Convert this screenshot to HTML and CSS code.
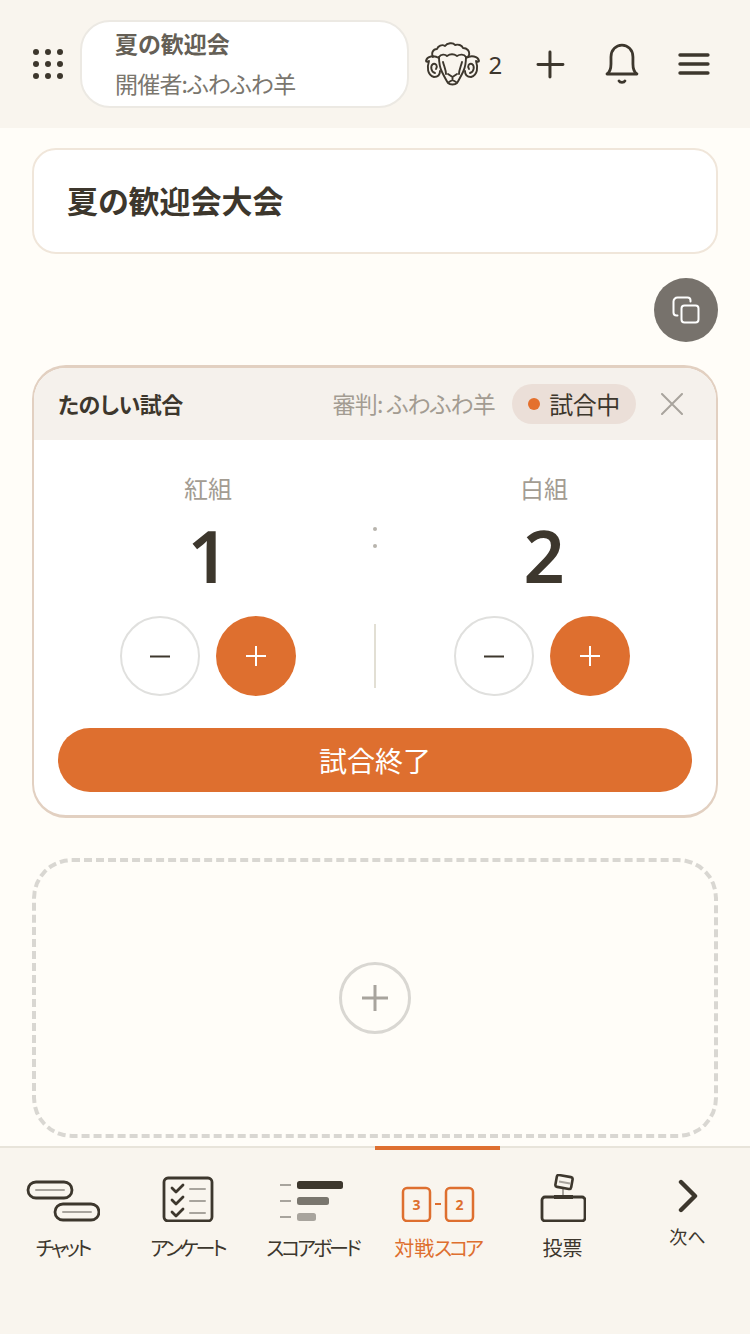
FILE: index.html
```html
<!DOCTYPE html>
<html lang="ja">
<head>
    <meta charset="UTF-8">
    <meta name="viewport" content="width=device-width, initial-scale=1.0">
    <title>夏の歓迎会大会</title>
    <link rel="stylesheet" href="styles.css">
</head>
<body>

    <header class="top-bar">
        <svg class="grid-icon" width="30" height="30" viewBox="0 0 30 30" fill="#3d372d">
            <circle cx="3" cy="3" r="3"/><circle cx="15" cy="3" r="3"/><circle cx="27" cy="3" r="3"/>
            <circle cx="3" cy="15" r="3"/><circle cx="15" cy="15" r="3"/><circle cx="27" cy="15" r="3"/>
            <circle cx="3" cy="27" r="3"/><circle cx="15" cy="27" r="3"/><circle cx="27" cy="27" r="3"/>
        </svg>
        <div class="event-pill">
            <div class="event-name">夏の歓迎会</div>
            <div class="event-host">開催者:ふわふわ羊</div>
        </div>
        <div class="members">
            <svg width="55" height="44" viewBox="0 0 55 44" fill="none" stroke="#3d372d" stroke-width="1.900" stroke-linecap="round" stroke-linejoin="round">
                <!-- wool -->
                <path d="M8 15c-2-4 0-8 4-8 1-3 5-5 8-3 2-3 8-4 10-1 3-1 7 0 8 3 4 0 7 3 6 7l-1 2"/>
                <path d="M14 15c2-3 6-3 8-1 3-2 7-2 10 0 3-2 7-2 9 1"/>
                <!-- horns -->
                <path d="M14 16C9 13 2 14 1 19c0 1 2 1 3 0-2 6-2 14 5 16 4 0 6-2 6-6"/>
                <path d="M41 16c5-3 12-2 13 3 0 1-2 1-3 0 2 6 2 14-5 16-4 0-6-2-6-6"/>
                <path d="M10 31c-4-1-5-7-2-9 3-1 5 2 3 5"/>
                <path d="M45 31c4-1 5-7 2-9-3-1-5 2-3 5"/>
                <!-- face -->
                <path d="M14 15c0 6 1 11 3 15 2 4 4 8 6 11 2 2 7 2 9 0 2-3 4-7 6-11 2-4 3-9 3-15"/>
                <path d="M18 20c1 4 3 8 3 12M37 20c-1 4-3 8-3 12"/>
                <path d="M23 32l4.500 3 4.500-3M27.500 35v3M24 40l3.500-2 3.500 2"/>
            </svg>
            <span class="member-count">2</span>
        </div>
        <svg class="add-icon" width="30" height="30" viewBox="0 0 30 30" fill="none" stroke="#3d372d" stroke-width="3" stroke-linecap="round">
            <path d="M15 3v25M3 15.500h25"/>
        </svg>
        <svg class="bell-icon" width="36" height="44" viewBox="0 0 36 44" fill="none" stroke="#3d372d" stroke-width="2.800" stroke-linecap="round" stroke-linejoin="round">
            <path d="M3 32c3-2 4-5 4-10v-7C7 8 12 3 18 3s11 5 11 12v7c0 5 1 8 4 10z"/>
            <path d="M15 39c1 2 5 2 6 0"/>
        </svg>
        <svg class="menu-icon" width="32" height="24" viewBox="0 0 32 24" fill="none" stroke="#3d372d" stroke-width="3.400" stroke-linecap="round">
            <path d="M2 3h28M2 12h28M2 21h28"/>
        </svg>
    </header>

    <main class="content">
        <div class="title-card">夏の歓迎会大会</div>

        <div class="copy-row">
            <button class="copy-button">
                <svg width="30" height="30" viewBox="0 0 30 30" fill="none" stroke="#fff" stroke-width="2" stroke-linecap="round" stroke-linejoin="round">
                    <rect x="10.500" y="10.500" width="17" height="17" rx="3"/>
                    <path d="M6.500 20.500h-1a3 3 0 0 1-3-3v-11a4 4 0 0 1 4-4h10a3 3 0 0 1 3 3v1"/>
                </svg>
            </button>
        </div>

        <section class="match-card">
            <div class="match-header">
                <span class="match-name">たのしい試合</span>
                <span class="referee">審判: ふわふわ羊</span>
                <span class="status-badge"><i class="status-dot"></i>試合中</span>
                <svg class="close-icon" width="22" height="22" viewBox="0 0 22 22" fill="none" stroke="#a8a49d" stroke-width="2" stroke-linecap="round">
                    <path d="M1 1l20 20M21 1L1 21"/>
                </svg>
            </div>

            <div class="score-area">
                <div class="team">
                    <div class="team-name">紅組</div>
                    <div class="team-score">1</div>
                    <div class="score-buttons">
                        <button class="round-button minus"><svg width="20" height="20" viewBox="0 0 20 20"><path d="M0 10.500h20" stroke="#3d372d" stroke-width="2"/></svg></button>
                        <button class="round-button plus"><svg width="20" height="20" viewBox="0 0 20 20"><path d="M0 10h20M10 0v20" stroke="#fff" stroke-width="2"/></svg></button>
                    </div>
                </div>
                <div class="score-divider">
                    <div class="colon"><i></i><i></i></div>
                    <div class="divider-line"></div>
                </div>
                <div class="team">
                    <div class="team-name">白組</div>
                    <div class="team-score">2</div>
                    <div class="score-buttons">
                        <button class="round-button minus"><svg width="20" height="20" viewBox="0 0 20 20"><path d="M0 10.500h20" stroke="#3d372d" stroke-width="2"/></svg></button>
                        <button class="round-button plus"><svg width="20" height="20" viewBox="0 0 20 20"><path d="M0 10h20M10 0v20" stroke="#fff" stroke-width="2"/></svg></button>
                    </div>
                </div>
            </div>

            <button class="end-button">試合終了</button>
        </section>

        <div class="add-card">
            <button class="add-button">
                <svg width="26" height="26" viewBox="0 0 26 26"><path d="M0 13h26M13 0v26" stroke="#a8a49d" stroke-width="3"/></svg>
            </button>
        </div>
    </main>

    <nav class="tab-bar">
        <div class="tab">
            <svg class="tab-icon" width="74" height="42" viewBox="0 0 74 42" fill="none" stroke-linecap="round">
                <rect x="2" y="2" width="44" height="16" rx="8" stroke="#3d372d" stroke-width="2.800"/>
                <path d="M10 10h28" stroke="#a8a49d" stroke-width="2"/>
                <rect x="29" y="24" width="44" height="16" rx="8" stroke="#3d372d" stroke-width="2.800"/>
                <path d="M37 32h28" stroke="#a8a49d" stroke-width="2"/>
            </svg>
            <span class="kana">チャット</span>
        </div>
        <div class="tab">
            <svg class="tab-icon" width="52" height="46" viewBox="0 0 52 46" fill="none" stroke-linecap="round" stroke-linejoin="round">
                <rect x="2" y="2" width="48" height="43" rx="4" stroke="#3d372d" stroke-width="2.800"/>
                <path d="M10 13l4 4 7-7M10 25l4 4 7-7M10 37l4 4 7-7" stroke="#3d372d" stroke-width="2.800" transform="translate(0 -1)"/>
                <path d="M28 13h15M28 25h15M28 37h15" stroke="#a8a49d" stroke-width="2"/>
            </svg>
            <span class="kana">アンケート</span>
        </div>
        <div class="tab">
            <svg class="tab-icon score-icon" width="64" height="42" viewBox="0 0 64 42" fill="none">
                <path d="M0 5h11M0 21h11M0 37h11" stroke="#a8a49d" stroke-width="2"/>
                <rect x="17" y="1" width="46" height="8" rx="2.500" fill="#3d372d"/>
                <rect x="17" y="17" width="32" height="8" rx="2.500" fill="#7a766e"/>
                <rect x="17" y="33" width="19" height="8" rx="2.500" fill="#a8a49d"/>
            </svg>
            <span class="kana">スコアボード</span>
        </div>
        <div class="tab active">
            <svg class="tab-icon" width="74" height="36" viewBox="0 0 74 36" fill="none" stroke="#de6f2f" stroke-width="2.500">
                <rect x="2" y="2" width="27" height="33" rx="4"/>
                <rect x="45" y="2" width="27" height="33" rx="4"/>
                <path d="M34 18h6" stroke-width="2"/>
                <text x="15.500" y="24" text-anchor="middle" class="icon-digit">3</text>
                <text x="58.500" y="24" text-anchor="middle" class="icon-digit">2</text>
            </svg>
            <span>対戦<span class="kana">スコア</span></span>
        </div>
        <div class="tab">
            <svg class="tab-icon" width="46" height="48" viewBox="0 0 46 48" fill="none" stroke-linejoin="round">
                <path d="M23 14v10" stroke="#a8a49d" stroke-width="2"/>
                <rect x="16" y="2" width="16" height="12" rx="2" transform="rotate(10 24 8)" stroke="#3d372d" stroke-width="2.600"/>
                <path d="M19 7.500l11 2" stroke="#a8a49d" stroke-width="2"/>
                <rect x="2" y="23" width="43" height="24" rx="3" stroke="#3d372d" stroke-width="2.800"/>
                <path d="M14 23h19" stroke="#3d372d" stroke-width="4"/>
            </svg>
            <span>投票</span>
        </div>
        <div class="tab next">
            <svg class="tab-icon" width="20" height="34" viewBox="0 0 20 34" fill="none" stroke="#3d372d" stroke-width="4.400" stroke-linecap="round" stroke-linejoin="round">
                <path d="M3 3l14 14L3 31"/>
            </svg>
            <span>次へ</span>
        </div>
    </nav>

</body>
</html>
```

FILE: styles.css
```css
* {
    box-sizing: border-box;
}

body {
    margin: 0;
    height: 1334px;
    overflow: hidden;
    display: flex;
    flex-direction: column;
    background-color: #fffdf8;
    color: #3d372d;
    font-family: 'Noto Sans CJK JP', 'Noto Sans', sans-serif;
    font-feature-settings: 'palt';
}

button {
    padding: 0;
    font-family: inherit;
    font-feature-settings: inherit;
    display: flex;
    align-items: center;
    justify-content: center;
}

/* top bar */
.top-bar {
    height: 128px;
    flex-shrink: 0;
    display: flex;
    align-items: center;
    padding: 0 40px 0 33px;
    background-color: #f9f5ee;
}

.grid-icon {
    margin-right: 17px;
    flex-shrink: 0;
}

.event-pill {
    width: 330px;
    height: 88px;
    padding: 0 33px 2px;
    display: flex;
    flex-direction: column;
    justify-content: center;
    gap: 8px;
    background-color: #fff;
    border: 2px solid #ece9e3;
    border-radius: 30px;
}

.event-name {
    font-size: 23px;
    line-height: 32px;
    font-weight: 700;
    color: #655f56;
}

.event-host {
    font-size: 23px;
    line-height: 32px;
    letter-spacing: -0.8px;
    color: #7a766e;
}

.members {
    display: flex;
    align-items: center;
    gap: 8px;
    margin-left: 16px;
}

.member-count {
    font-size: 24px;
    color: #3d372d;
    font-family: 'Noto Sans', sans-serif;
}

.add-icon {
    margin-left: 33px;
}

.bell-icon {
    margin-left: 39px;
}

.menu-icon {
    margin-left: 38px;
}

/* main column */
.content {
    flex: 1;
    padding: 20px 32px 0;
}

.title-card {
    height: 106px;
    padding: 0 0 3px 33px;
    display: flex;
    align-items: center;
    background-color: #fff;
    border: 2px solid #f0e6da;
    border-radius: 24px;
    font-size: 31px;
    font-weight: 700;
    color: #3d372d;
}

.copy-row {
    display: flex;
    justify-content: flex-end;
    margin-top: 24px;
}

.copy-button {
    width: 64px;
    height: 64px;
    border: none;
    border-radius: 50%;
    background-color: #77726c;
}

.match-card {
    margin-top: 23px;
    height: 453px;
    border: solid #e2d0c1;
    border-width: 3px 2px;
    border-radius: 34px;
    background-color: #fff;
    overflow: hidden;
}

.match-header {
    height: 72px;
    padding: 0 33px 0 24px;
    display: flex;
    align-items: center;
    background-color: #f5f1ec;
}

.match-name,
.referee {
    padding-bottom: 2px;
}

.match-name {
    font-size: 22px;
    font-weight: 700;
    letter-spacing: -0.5px;
    margin-right: auto;
    color: #3d372d;
}

.referee {
    font-size: 23px;
    letter-spacing: -0.8px;
    color: #a39c92;
}

.status-badge {
    height: 40px;
    width: 124px;
    margin-left: 17px;
    padding-bottom: 2px;
    display: flex;
    align-items: center;
    justify-content: center;
    gap: 9px;
    background-color: #ebdfd8;
    border-radius: 20px;
    font-size: 24px;
    letter-spacing: -0.5px;
    color: #3d372d;
}

.status-dot {
    width: 12px;
    height: 12px;
    margin-top: 2px;
    border-radius: 50%;
    background-color: #e4702d;
}

.close-icon {
    margin-left: 25px;
}

.score-area {
    display: flex;
    padding: 30px 8px 0;
    height: 256px;
}

.team {
    flex: 1;
    display: flex;
    flex-direction: column;
    align-items: center;
}

.team-name {
    font-size: 24px;
    line-height: 36px;
    color: #a39c92;
}

.team-score {
    margin-top: 4px;
    font-size: 72px;
    line-height: 90px;
    font-weight: 600;
    color: #3d372d;
    font-family: 'Noto Sans', sans-serif;
}

.team:last-child .team-name,
.team:last-child .team-score {
    margin-left: 4px;
}

.score-buttons {
    display: flex;
    gap: 16px;
    margin-top: 16px;
}

.round-button {
    width: 80px;
    height: 80px;
    border-radius: 50%;
}

.minus {
    background-color: #fff;
    border: 2px solid #e0e0de;
}

.plus {
    background-color: #de6f2f;
    border: none;
}

.score-divider {
    width: 2px;
    display: flex;
    flex-direction: column;
    align-items: center;
}

.colon {
    display: flex;
    flex-direction: column;
    gap: 13px;
    margin-top: 57px;
}

.colon i {
    display: block;
    width: 4px;
    height: 4px;
    border-radius: 50%;
    background-color: #b8b4ad;
}

.divider-line {
    width: 2px;
    height: 64px;
    margin-top: 76px;
    background-color: #e2dfd4;
}

.end-button {
    width: 634px;
    height: 64px;
    margin: 32px 0 0 24px;
    border: none;
    border-radius: 32px;
    background-color: #de6f2f;
    color: #fff;
    font-size: 28px;
}

.add-card {
    height: 280px;
    margin-top: 40px;
    display: flex;
    align-items: center;
    justify-content: center;
    border: 4px dashed #d9d7d2;
    border-radius: 40px;
}

.add-button {
    width: 72px;
    height: 72px;
    border: 3px solid #d9d7d2;
    border-radius: 50%;
    background: none;
}

/* bottom tabs */
.tab-bar {
    height: 188px;
    flex-shrink: 0;
    display: flex;
    background-color: #f9f5ee;
    border-top: 2px solid #e8e4da;
}

.tab {
    width: 125px;
    height: 114px;
    position: relative;
    display: flex;
    flex-direction: column;
    align-items: center;
    justify-content: flex-end;
    gap: 12px;
    font-size: 20px;
    line-height: 28px;
    color: #3d372d;
}

.tab.active {
    color: #de6f2f;
}

.tab.active::before {
    content: "";
    position: absolute;
    top: -2px;
    left: 0;
    right: 0;
    height: 4px;
    background-color: #de6f2f;
}

.tab.next {
    height: 102px;
    gap: 9px;
    font-size: 18px;
}

.kana {
    letter-spacing: -3px;
}

.score-icon {
    margin-right: 2px;
}

.icon-digit {
    font-family: 'Noto Sans', sans-serif;
    font-size: 14px;
    font-weight: 700;
    fill: #de6f2f;
    stroke: none;
}
```
